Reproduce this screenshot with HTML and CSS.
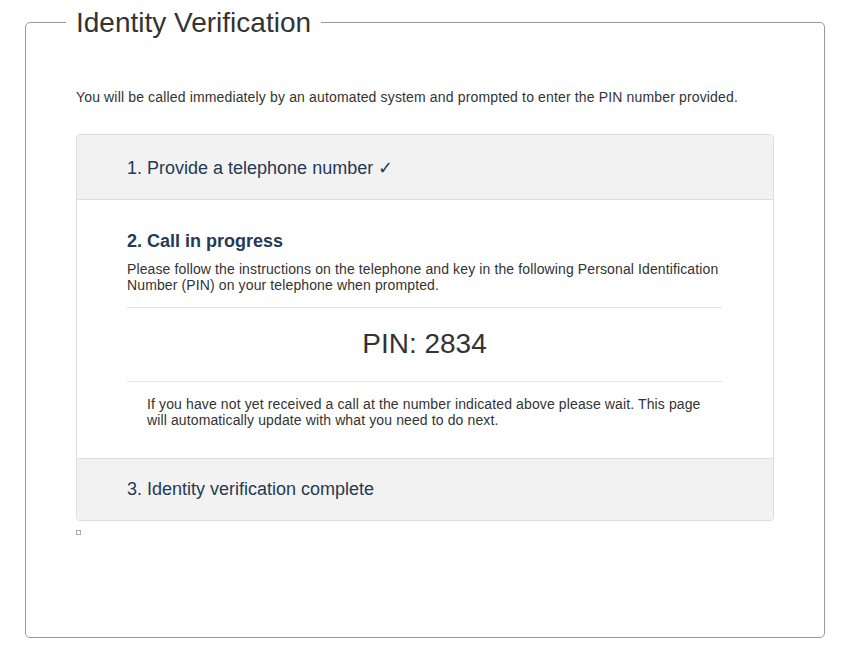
FILE: index.html
```html
<!DOCTYPE html>
<html>
<head>
<meta charset="utf-8">
<link rel="stylesheet" href="styles.css">
</head>
<body>
<fieldset class="box">
  <legend class="box-title">Identity Verification</legend>
  <p class="intro">You will be called immediately by an automated system and prompted to enter the PIN number provided.</p>
  <div class="panel">
    <div class="step step-done">1. Provide a telephone number &#10003;</div>
    <div class="step-body">
      <h2 class="step-heading">2. Call in progress</h2>
      <p class="step-text">Please follow the instructions on the telephone and key in the following Personal Identification Number (PIN) on your telephone when prompted.</p>
      <div class="pin">PIN: 2834</div>
      <p class="wait">If you have not yet received a call at the number indicated above please wait. This page will automatically update with what you need to do next.</p>
    </div>
    <div class="step step-last">3. Identity verification complete</div>
  </div>
  <span class="marker"></span>
</fieldset>
</body>
</html>
```
FILE: styles.css
```css
html, body { background: #fff; }
body {
  margin: 7px 0 0 0;
  font-family: "Liberation Sans", Arial, sans-serif;
  color: #333;
}
.box {
  box-sizing: border-box;
  margin: 0 0 0 25px;
  width: 800px;
  height: 631px;
  padding: 0 50px;
  border: 1px solid #999;
  border-radius: 5px;
}
.box-title {
  font-size: 28px;
  line-height: 31px;
  padding: 0 10px;
  margin-left: -10px;
  color: #333;
}
.intro {
  font-size: 14px;
  letter-spacing: 0.15px;
  line-height: 16px;
  margin: 51px 0 29px 0;
}
.panel {
  border: 1px solid #ddd;
  border-radius: 4px;
  overflow: hidden;
}
.step {
  background: #f2f2f2;
  color: #253a54;
  font-size: 18px;
  line-height: 20px;
  padding: 23px 50px 21px;
}
.step-done { border-bottom: 1px solid #ddd; }
.step-last { border-top: 1px solid #ddd; padding: 20px 50px 21px; }
.step-body {
  padding: 31px 51px 30px 50px;
}
.step-heading {
  margin: 0;
  font-size: 18px;
  line-height: 20px;
  font-weight: bold;
  color: #253a54;
}
.step-text {
  margin: 10px 0 0 0;
  font-size: 14px;
  letter-spacing: 0.12px;
  line-height: 16px;
  padding-bottom: 14px;
  border-bottom: 1px solid #e3e3e3;
}
.pin {
  text-align: center;
  font-size: 28px;
  line-height: 32px;
  padding: 20px 0 21px;
  border-bottom: 1px solid #e3e3e3;
  color: #333;
}
.wait {
  margin: 14px 0 0 0;
  padding: 0 20px;
  font-size: 14px;
  letter-spacing: 0.12px;
  line-height: 16px;
}
.marker {
  display: block;
  margin-top: 9px;
  width: 3px;
  height: 3px;
  border: 1px solid #aaa;
}
```
